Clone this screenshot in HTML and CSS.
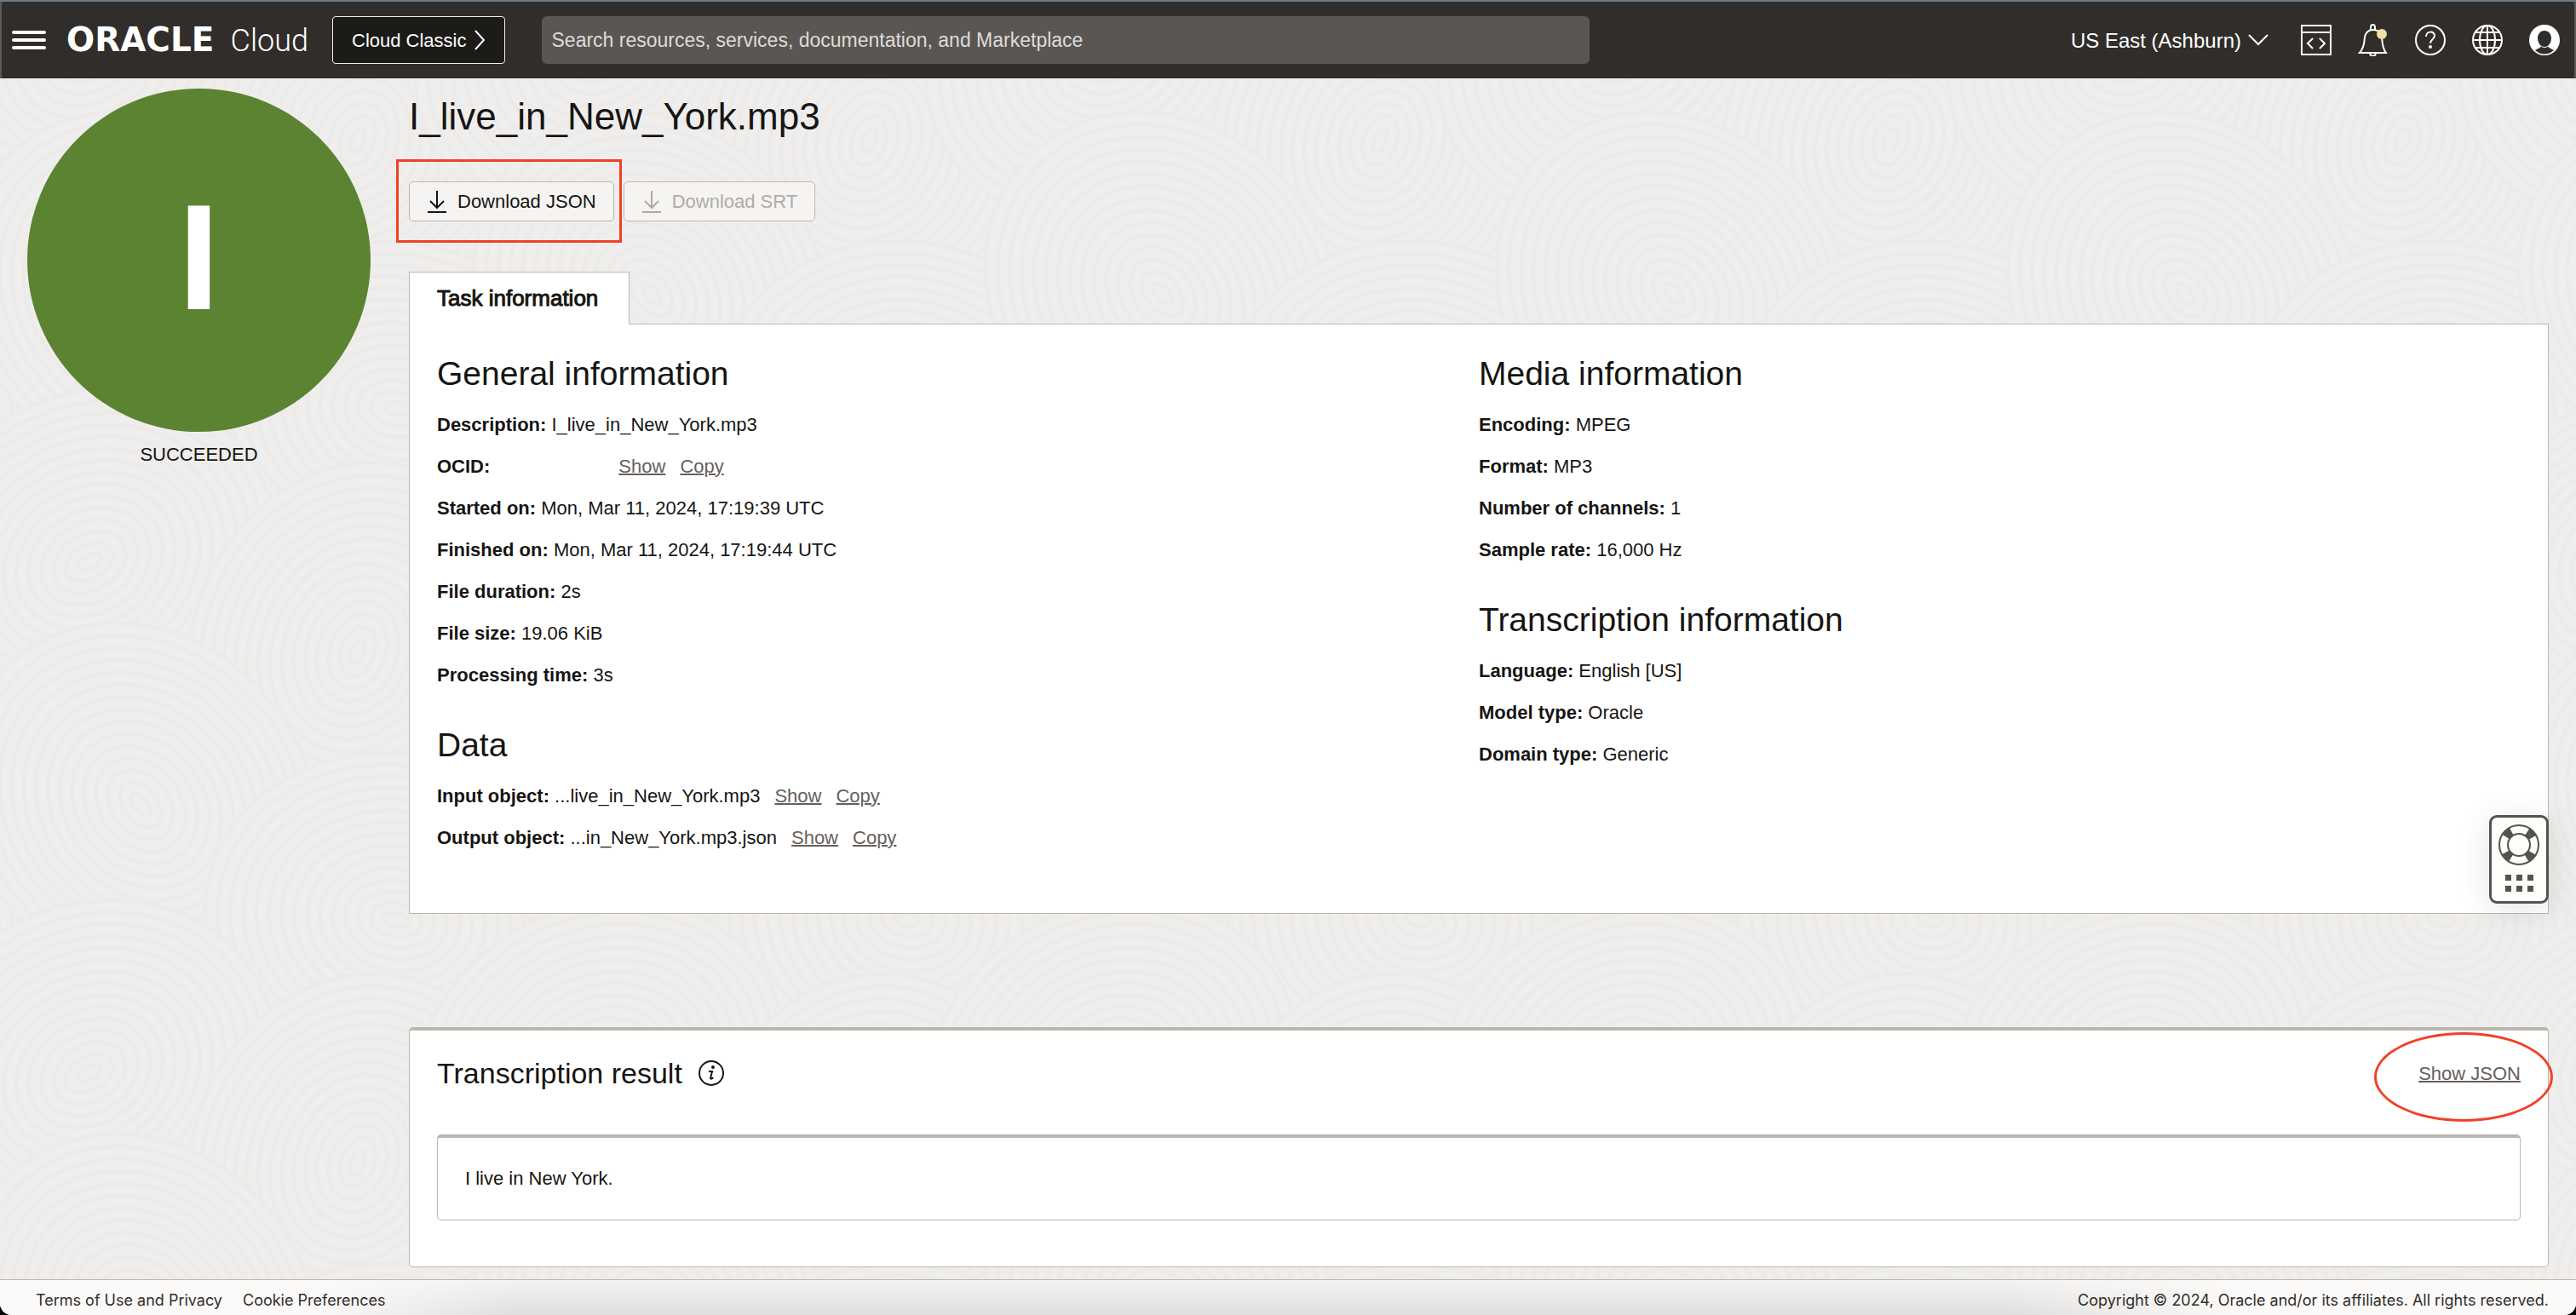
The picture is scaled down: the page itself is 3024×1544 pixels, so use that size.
FILE: index.html
```html
<!DOCTYPE html>
<html lang="en">
<head>
<meta charset="utf-8">
<meta name="viewport" content="width=device-width, initial-scale=1">
<title>I_live_in_New_York.mp3 - Oracle Cloud</title>
<link rel="stylesheet" href="styles.css">
</head>
<body>
<header class="topbar">
  <button class="icon-btn menu-btn" type="button" aria-label="Navigation menu">
    <svg width="40" height="24" viewBox="0 0 40 24" stroke="#fff" stroke-width="4" stroke-linecap="round"><path d="M2 3h36M2 12h36M2 21h36"/></svg>
  </button>
  <a class="brand" href="#"><span class="brand-oracle">ORACLE</span><span class="brand-cloud">Cloud</span></a>
  <button class="classic-btn" type="button">Cloud Classic
    <svg width="14" height="24" viewBox="0 0 14 24" fill="none" stroke="#fff" stroke-width="2"><path d="M2 1l10 11L2 23"/></svg>
  </button>
  <input class="search" type="search" aria-label="Search" placeholder="Search resources, services, documentation, and Marketplace">
  <div class="tools">
    <button class="region-btn" type="button">US East (Ashburn)
      <svg width="24" height="14" viewBox="0 0 24 14" fill="none" stroke="#fff" stroke-width="2"><path d="M1 1l11 11L23 1"/></svg>
    </button>
    <button class="icon-btn" type="button" aria-label="Developer tools">
      <svg width="38" height="38" viewBox="0 0 38 38" fill="none" stroke="#fff" stroke-width="2"><path d="M2 2h34v34H2zM2 10h34M15 17l-6 6 6 6M23 17l6 6-6 6"/></svg>
    </button>
    <button class="icon-btn" type="button" aria-label="Announcements">
      <svg width="38" height="38" viewBox="0 0 38 38" fill="none" stroke="#fff" stroke-width="2"><path d="M3 34h31c-5-7-4-12-5-18-1-6-5-9-10-9s-9 3-10 9c-1 6 0 11-6 18zM16 7V4c0-4 5-4 5 0v3M15 34c0 5 7 5 7 0"/><circle cx="29" cy="12" r="6" fill="#f3dda2" stroke="none"/></svg>
    </button>
    <button class="icon-btn" type="button" aria-label="Help">
      <svg width="38" height="38" viewBox="0 0 38 38" fill="none" stroke="#fff" stroke-width="2"><circle cx="19" cy="19" r="17"/><path d="M14 15c0-7 10-7 10-1 0 4-5 4-5 9"/><circle cx="19" cy="27" r="2" fill="#fff" stroke="none"/></svg>
    </button>
    <button class="icon-btn" type="button" aria-label="Language">
      <svg width="38" height="38" viewBox="0 0 38 38" fill="none" stroke="#fff" stroke-width="2"><circle cx="19" cy="19" r="17"/><ellipse cx="19" cy="19" rx="9" ry="17"/><path d="M19 2v34M2 19h34M5 10h28M5 28h28"/></svg>
    </button>
    <button class="icon-btn" type="button" aria-label="Profile">
      <svg width="38" height="38" viewBox="0 0 38 38"><circle cx="19" cy="19" r="18" fill="#fff"/><path d="M19 8c-5 0-8 4-8 9 0 4 2 7 4 9 0 2-4 3-7 5 7 6 15 6 22 0-3-2-7-3-7-5 2-2 4-5 4-9 0-5-3-9-8-9z" fill="#312d2a"/><path d="M15 26c2 2 6 2 8 0" stroke="#fff" fill="none"/></svg>
    </button>
  </div>
</header>

<main class="page">
  <aside class="status">
    <div class="status-circle">I</div>
    <div class="status-text">SUCCEEDED</div>
  </aside>

  <div class="content">
    <h1 class="title">I_live_in_New_York.mp3</h1>
    <div class="actions">
      <span class="highlight">
        <button class="btn" type="button">
          <svg width="22" height="26" viewBox="0 0 22 26" fill="none" stroke="currentColor" stroke-width="2"><path d="M11 0v20M3 12l8 8 8-8M0 25h22"/></svg>
          Download JSON</button>
      </span>
      <button class="btn" type="button" disabled>
        <svg width="22" height="26" viewBox="0 0 22 26" fill="none" stroke="currentColor" stroke-width="2"><path d="M11 0v20M3 12l8 8 8-8M0 25h22"/></svg>
        Download SRT</button>
    </div>

    <div class="tabs" role="tablist"><button class="tab" type="button" role="tab" aria-selected="true">Task information</button></div>
    <section class="panel">
      <div class="column">
        <section class="group">
          <h2 class="group-title">General information</h2>
          <p class="row"><b>Description:</b> I_live_in_New_York.mp3</p>
          <p class="row"><b>OCID:</b><span class="blank"></span><a class="link" href="#">Show</a><a class="link" href="#">Copy</a></p>
          <p class="row"><b>Started on:</b> Mon, Mar 11, 2024, 17:19:39 UTC</p>
          <p class="row"><b>Finished on:</b> Mon, Mar 11, 2024, 17:19:44 UTC</p>
          <p class="row"><b>File duration:</b> 2s</p>
          <p class="row"><b>File size:</b> 19.06 KiB</p>
          <p class="row"><b>Processing time:</b> 3s</p>
        </section>
        <section class="group">
          <h2 class="group-title">Data</h2>
          <p class="row"><b>Input object:</b> ...live_in_New_York.mp3<a class="link" href="#">Show</a><a class="link" href="#">Copy</a></p>
          <p class="row"><b>Output object:</b> ...in_New_York.mp3.json<a class="link" href="#">Show</a><a class="link" href="#">Copy</a></p>
        </section>
      </div>
      <div class="column">
        <section class="group">
          <h2 class="group-title">Media information</h2>
          <p class="row"><b>Encoding:</b> MPEG</p>
          <p class="row"><b>Format:</b> MP3</p>
          <p class="row"><b>Number of channels:</b> 1</p>
          <p class="row"><b>Sample rate:</b> 16,000 Hz</p>
        </section>
        <section class="group">
          <h2 class="group-title">Transcription information</h2>
          <p class="row"><b>Language:</b> English [US]</p>
          <p class="row"><b>Model type:</b> Oracle</p>
          <p class="row"><b>Domain type:</b> Generic</p>
        </section>
      </div>
    </section>

    <section class="result">
      <div class="result-head">
        <h2 class="result-title">Transcription result</h2>
        <svg class="info" width="32" height="32" viewBox="0 0 32 32" fill="none" stroke="#161513" stroke-width="2"><circle cx="16" cy="16" r="14"/><path d="M13 14h4l-2 8c0 1 2 1 3-1"/><circle cx="18" cy="9" r="2" fill="#161513" stroke="none"/></svg>
        <span class="json-link"><a class="link" href="#">Show JSON</a></span>
      </div>
      <div class="transcript">I live in New York.</div>
    </section>
  </div>
</main>

<button class="support" type="button" aria-label="Support">
  <svg width="50" height="84" viewBox="0 0 50 84" fill="none" stroke="#55534e"><circle cx="25" cy="25" r="18" stroke-width="11" stroke-dasharray="9 19.27" stroke-dashoffset="18.64"/><circle cx="25" cy="25" r="23" stroke-width="2"/><circle cx="25" cy="25" r="13" stroke-width="2"/><path d="M9 60h7v7H9zM22 60h7v7h-7zM35 60h7v7h-7zM9 73h7v7H9zM22 73h7v7h-7zM35 73h7v7h-7z" fill="#55534e" stroke="none"/></svg>
</button>

<div class="footer-wrap">
  <footer class="footer">
    <a href="#">Terms of Use and Privacy</a>
    <a href="#">Cookie Preferences</a>
    <span class="copyright">Copyright © 2024, Oracle and/or its affiliates. All rights reserved.</span>
  </footer>
</div>
</body>
</html>
```
FILE: styles.css
```css
* { box-sizing: border-box; }

body {
  margin: 0;
  min-height: 100vh;
  display: flex;
  flex-direction: column;
  color: #161513;
  font: 22px/25px "Liberation Sans", Arial, sans-serif;
  background: #f1efed url("data:image/svg+xml,%3Csvg xmlns='http://www.w3.org/2000/svg' xmlns:xlink='http://www.w3.org/1999/xlink' width='600' height='600' viewBox='0 0 400 400'%3E%3Cdefs%3E%3Cg id='s' fill='%23f0eeec' stroke='%23ecebe9' stroke-width='3'%3E%3Cellipse rx='130' ry='150'/%3E%3Cellipse rx='121' ry='140'/%3E%3Cellipse rx='112' ry='130'/%3E%3Cellipse rx='103' ry='120'/%3E%3Cellipse rx='94' ry='110'/%3E%3Cellipse rx='85' ry='100'/%3E%3Cellipse rx='76' ry='90'/%3E%3Cellipse rx='67' ry='80'/%3E%3Cellipse rx='58' ry='70'/%3E%3Cellipse rx='49' ry='60'/%3E%3Cellipse rx='40' ry='50'/%3E%3Cellipse rx='31' ry='40'/%3E%3Cellipse rx='22' ry='30'/%3E%3Cellipse rx='13' ry='20'/%3E%3Cellipse rx='5' ry='10'/%3E%3C/g%3E%3Cg id='t'%3E%3Cuse xlink:href='%23s' transform='translate(70 40) rotate(60)'/%3E%3Cuse xlink:href='%23s' transform='translate(280 110) rotate(20)'/%3E%3Cuse xlink:href='%23s' transform='translate(110 230) rotate(-40)'/%3E%3Cuse xlink:href='%23s' transform='translate(310 320) rotate(100)'/%3E%3C/g%3E%3C/defs%3E%3Cuse xlink:href='%23t' x='-400' y='-400'/%3E%3Cuse xlink:href='%23t' y='-400'/%3E%3Cuse xlink:href='%23t' x='400' y='-400'/%3E%3Cuse xlink:href='%23t' x='-400'/%3E%3Cuse xlink:href='%23t'/%3E%3Cuse xlink:href='%23t' x='400'/%3E%3Cuse xlink:href='%23t' x='-400' y='400'/%3E%3Cuse xlink:href='%23t' y='400'/%3E%3Cuse xlink:href='%23t' x='400' y='400'/%3E%3C/svg%3E");
}

h1, h2, p { margin: 0; font-weight: 400; }
svg { display: block; }
button { font: inherit; color: inherit; cursor: pointer; }

/* Top bar */
.topbar {
  display: flex;
  align-items: center;
  height: 92px;
  padding: 0 18px 0 14px;
  border: solid #6d7b87;
  border-width: 2px 0 0;
  box-shadow: inset 2px 0 #5c5956, inset -2px 0 #5c5956;
  background: #312d2a;
  color: #fff;
}
.icon-btn { padding: 0; border: 0; background: none; }
.menu-btn { margin-right: 24px; }
.brand {
  display: flex;
  align-items: baseline;
  justify-content: space-between;
  width: 284px;
  margin-right: 28px;
  color: #fff;
  text-decoration: none;
  line-height: 44px;
}
.brand-oracle { font-family: "DejaVu Sans", sans-serif; font-weight: 700; font-size: 39px; }
.brand-cloud { font-family: Roboto, sans-serif; font-weight: 300; font-size: 36px; }
.classic-btn {
  display: flex;
  align-items: center;
  gap: 8px;
  height: 56px;
  padding: 0 22px;
  border: 1px solid #f1efed;
  border-radius: 4px;
  background: #1c1b18;
  white-space: nowrap;
}
.search {
  flex: 0 1 1230px;
  height: 56px;
  margin-left: 43px;
  padding: 0 12px;
  border: 0;
  border-radius: 6px;
  background: #5b5652;
  color: #fff;
  font: inherit;
  font-size: 23px;
}
.search::placeholder { color: #dedcda; opacity: 1; }
.tools { display: flex; align-items: center; gap: 29px; margin-left: auto; }
.region-btn {
  display: flex;
  align-items: center;
  gap: 8px;
  padding: 0;
  margin-right: 8px;
  border: 0;
  background: none;
  font-size: 24px;
  white-space: nowrap;
}

/* Page */
.page {
  display: grid;
  grid-template-columns: 403px minmax(0, 1fr);
  gap: 45px;
  padding: 12px 32px 14px;
}
.status { text-align: center; }
.status-circle {
  display: grid;
  place-items: center;
  aspect-ratio: 1;
  padding-bottom: 8px;
  border-radius: 50%;
  background: #5b8332;
  color: #fff;
  font-size: 176px;
  font-weight: 700;
  line-height: 200px;
}
.status-text { margin-top: 14px; }
.title { margin-top: 8px; font-size: 44px; line-height: 50px; }
.actions { display: flex; gap: 11px; margin-top: 51px; }
.highlight { position: relative; }
.highlight::after {
  content: "";
  position: absolute;
  inset: -26px -9px -25px -15px;
  border: 3px solid #f04124;
  pointer-events: none;
}
.btn {
  display: flex;
  align-items: center;
  gap: 13px;
  height: 47px;
  padding: 0 20px 0 21px;
  border: 1px solid #bcb6b1;
  border-radius: 5px;
  background: #f5f4f2;
}
.btn:disabled { color: #b0aba6; }

.tabs { display: flex; margin: 59px 0 -1px; }
.tab {
  height: 62px;
  padding: 0 36px 0 32px;
  border: 1px solid #bcb6b1;
  border-bottom: 0;
  background: #fff;
  font-size: 26px;
  -webkit-text-stroke: 1px;
  position: relative;
}
.panel {
  display: grid;
  grid-template-columns: 1fr 1fr;
  padding: 34px 32px 76px;
  border: 1px solid #bcb6b1;
  background: #fff;
}
.column { display: flex; flex-direction: column; gap: 46px; }
.group { display: flex; flex-direction: column; gap: 24px; }
.group-title { font-size: 39px; line-height: 47px; }
.link { color: #665f5b; text-decoration: underline; text-decoration-thickness: 2px; }
.row .link { margin-left: 17px; }
.blank { display: inline-block; width: 134px; }

/* Transcription result */
.result {
  margin-top: 133px;
  padding: 30px 32px 54px;
  border: 1px solid #bcb6b1;
  border-top-width: 4px;
  border-radius: 5px;
  background: #fff;
}
.result-head { display: flex; align-items: center; }
.result-title { font-size: 34px; line-height: 40px; }
.info { margin-left: 18px; }
.json-link { position: relative; margin-left: auto; }
.json-link::after {
  content: "";
  position: absolute;
  inset: -36px -38px -44px -52px;
  border: 3px solid #f04124;
  border-radius: 50%;
  pointer-events: none;
}
.transcript {
  margin-top: 52px;
  padding: 35px 32px 36px;
  border: 1px solid #bcb6b1;
  border-top-width: 4px;
  border-radius: 5px;
}

/* Floating support widget */
.support {
  position: fixed;
  right: 32px;
  bottom: 483px;
  padding: 7px;
  border: 3px solid #55534e;
  border-radius: 9px;
  background: #fdfdfb;
  box-shadow: 0 6px 36px rgba(40, 60, 70, .14);
}

/* Footer */
.footer-wrap { margin-top: auto; background: #000; }
.footer {
  display: flex;
  align-items: center;
  gap: 24px;
  height: 42px;
  padding: 6px 32px 0 42px;
  border-top: 1px solid #bcb6b1;
  border-radius: 0 0 14px 14px;
  background:
    linear-gradient(90deg, #fbfaf8 12%, transparent 20%, transparent 78%, #fbfaf8 87%),
    linear-gradient(#f4f3f1, #e0dfdd) #fff;
  color: #312d2a;
  font: 18px/22px Inter, sans-serif;
}
.footer a { color: inherit; text-decoration: none; }
.copyright { margin-left: auto; }
```
